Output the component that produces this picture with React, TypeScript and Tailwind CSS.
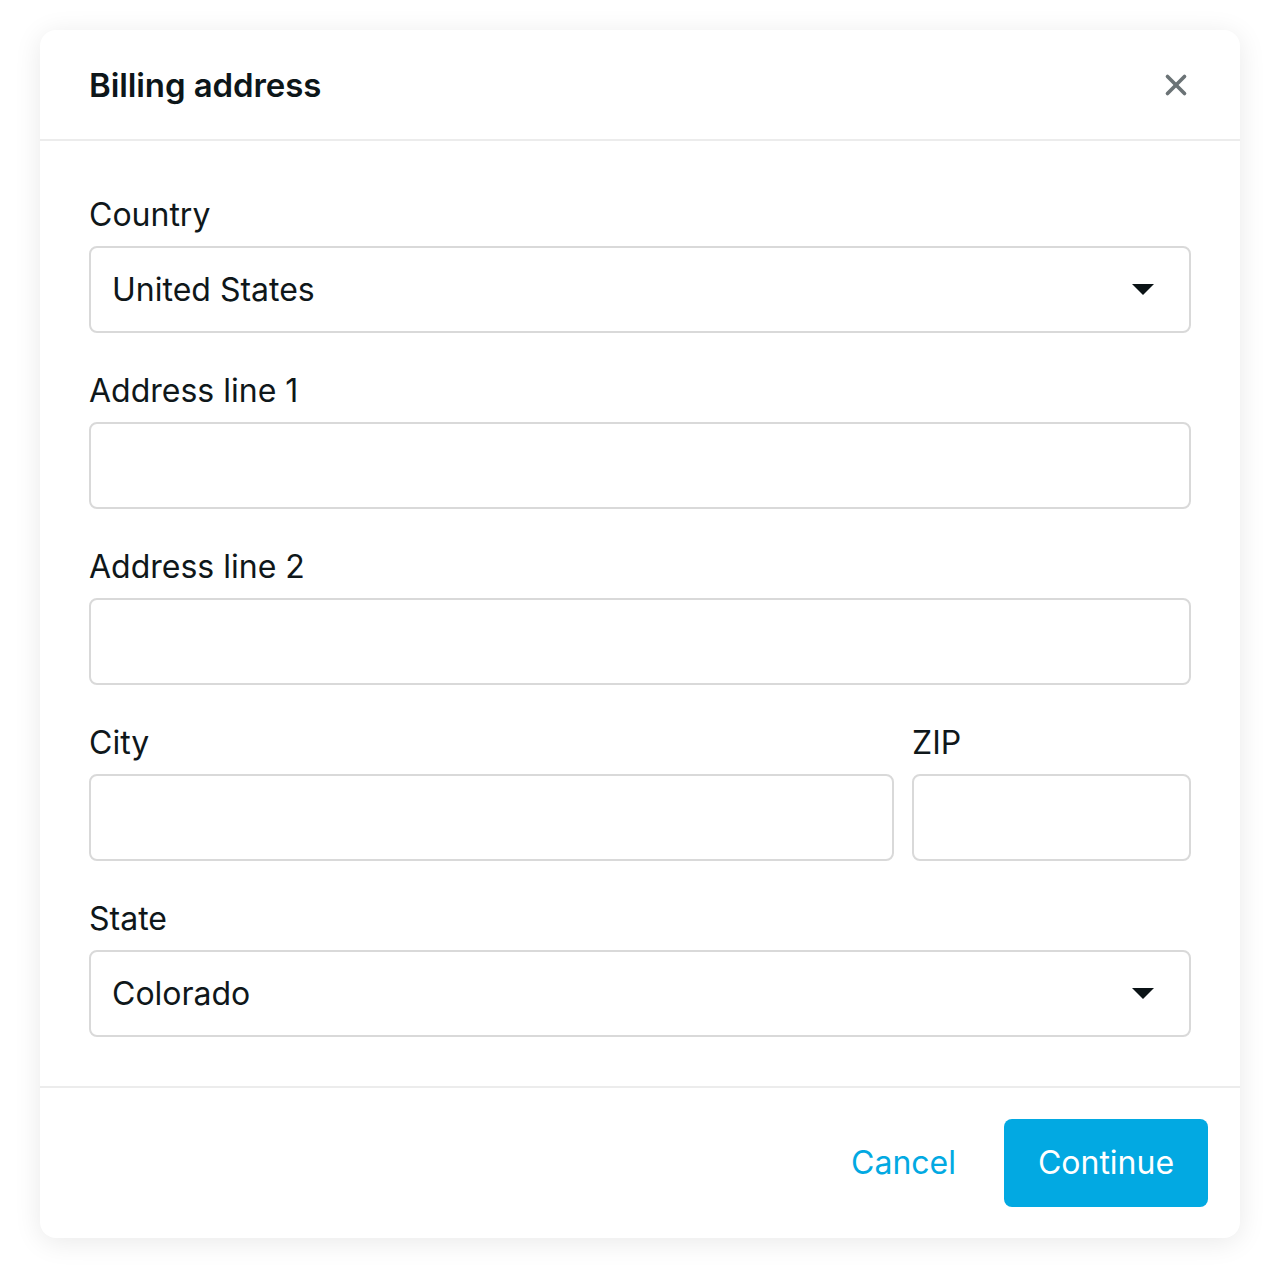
import { X } from "lucide-react";

function Caret() {
  return (
    <svg width="22" height="11" viewBox="0 0 22 11" className="shrink-0">
      <path d="M0 0 L22 0 L11 11 Z" fill="#0b1316" />
    </svg>
  );
}

function Field({ label, value, select, className }: { label: string; value?: string; select?: boolean; className?: string }) {
  return (
    <div className={className}>
      <div className="text-[32px] leading-[44px] text-[#0f171a]">{label}</div>
      <div className="mt-[9px] flex h-[87px] items-center justify-between rounded-lg border-2 border-[#d9d9d9] bg-white pl-[21px] pr-[35px] text-[32px] text-[#0f171a]">
        <span>{value}</span>
        {select && <Caret />}
      </div>
    </div>
  );
}

export default function App() {
  return (
    <div className="min-h-[1288px] bg-white px-10 pt-[30px] font-['Inter','Liberation_Sans',sans-serif]">
      <div className="flex h-[1208px] flex-col rounded-2xl bg-white shadow-[0_4px_28px_rgba(0,0,0,0.09)]">
        <div className="flex h-[111px] items-center justify-between border-b-2 border-[#ececec] pl-[49px] pr-[47px]">
          <h1 className="pt-[3px] text-[33px] font-semibold tracking-[-0.1px] text-[#0d1619]">Billing address</h1>
          <X className="h-[34px] w-[34px] text-[#6b7376]" strokeWidth={2.6} />
        </div>
        <div className="flex flex-col gap-[36px] border-b-2 border-[#ececec] px-[49px] pb-[49px] pt-[52px]">
          <Field label="Country" value="United States" select />
          <Field label="Address line 1" />
          <Field label="Address line 2" />
          <div className="flex gap-[18px]">
            <Field label="City" className="flex-1" />
            <Field label="ZIP" className="w-[279px]" />
          </div>
          <Field label="State" value="Colorado" select />
        </div>
        <div className="flex flex-1 items-center justify-end gap-12 pr-[32px]">
          <button className="text-[32px] text-[#02a9e2]">Cancel</button>
          <button className="h-[88px] w-[204px] rounded-lg bg-[#02a9e2] text-[32px] text-white">Continue</button>
        </div>
      </div>
    </div>
  );
}
